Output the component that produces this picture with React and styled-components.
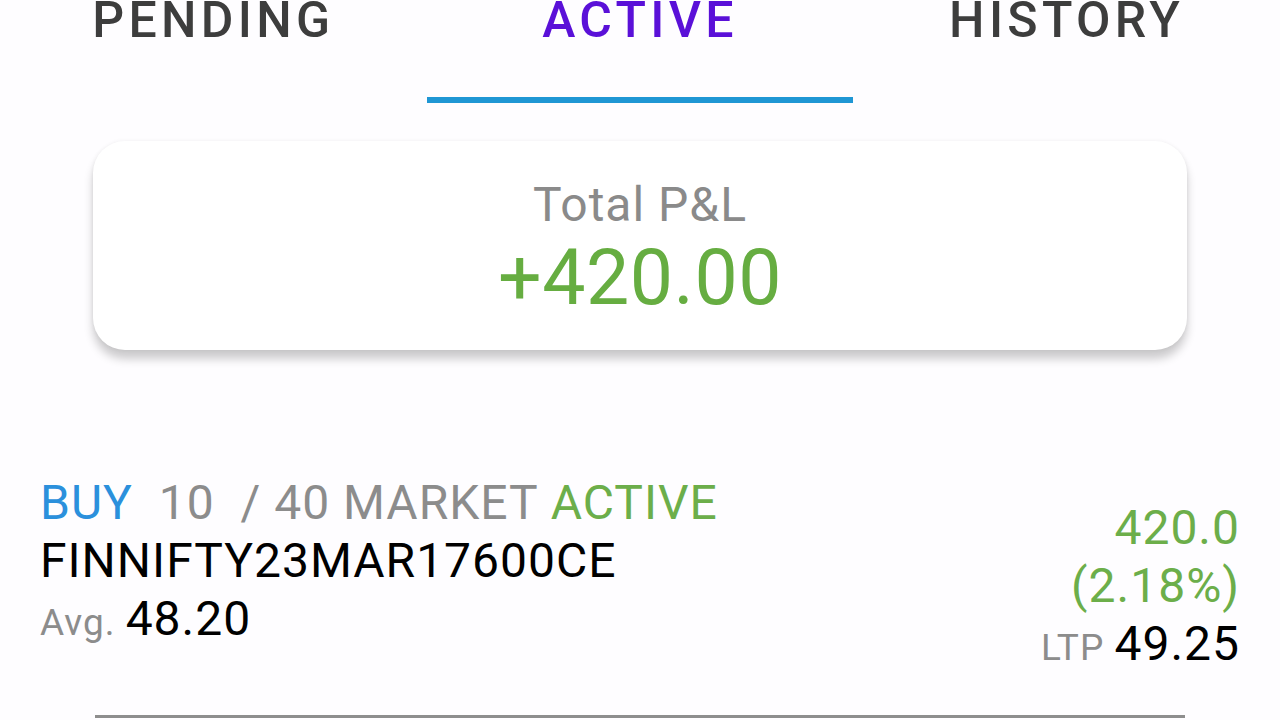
import React from "react";
import styled, { createGlobalStyle } from "styled-components";

const Global = createGlobalStyle`
  html, body { margin: 0; padding: 0; background: #fefdff; }
  body { font-family: Roboto, "Noto Sans", sans-serif; width: 1280px; height: 720px; overflow: hidden; }
`;

const Page = styled.div`
  width: 1280px;
  height: 720px;
  background: #fefdff;
  display: flex;
  flex-direction: column;
`;

const Tabs = styled.div`
  display: grid;
  grid-template-columns: repeat(3, 1fr);
  height: 103px;
`;

const Tab = styled.div`
  display: flex;
  flex-direction: column;
  align-items: center;
  justify-content: space-between;
`;

const TabLabel = styled.div`
  font-size: 50px;
  font-weight: 500;
  letter-spacing: 4.3px;
  line-height: 40px;
  color: ${p => (p.$active ? "#5a10d8" : "#3d3d3d")};
`;

const Indicator = styled.div`
  align-self: stretch;
  height: 6px;
  background: ${p => (p.$active ? "#1f97d4" : "transparent")};
`;

const Card = styled.div`
  margin: 38px 93px 0;
  height: 209px;
  border-radius: 32px;
  background: #fff;
  box-shadow: 0 9px 10px rgba(0, 0, 0, 0.2), 0 0 4px rgba(0, 0, 0, 0.06);
  display: flex;
  flex-direction: column;
  align-items: center;
  padding-top: 34px;
  box-sizing: border-box;
`;

const CardLabel = styled.div`
  font-size: 48px;
  letter-spacing: 1px;
  line-height: 60px;
  color: #8a8a8a;
`;

const CardValue = styled.div`
  margin-top: 3px;
  font-size: 77px;
  letter-spacing: 0.5px;
  line-height: 80px;
  color: #66ad41;
`;

const Row = styled.div`
  margin-top: 124px;
  padding: 0 40px;
  display: flex;
  justify-content: space-between;
  align-items: flex-start;
`;

const Left = styled.div`
  display: flex;
  flex-direction: column;
`;

const Right = styled.div`
  display: flex;
  flex-direction: column;
  align-items: flex-end;
  padding-top: 25px;
`;

const Line = styled.div`
  font-size: 48px;
  letter-spacing: 1px;
  line-height: 58px;
  color: ${p => p.$color || "#000"};
  white-space: pre;
`;

const Span = styled.span`
  color: ${p => p.$color};
  font-size: ${p => p.$size || "inherit"};
`;

const Divider = styled.div`
  margin: 38px 95px 0;
  height: 3px;
  background: #8e8e8e;
`;

const tabs = ["PENDING", "ACTIVE", "HISTORY"];

export default function App() {
  return (
    <Page>
      <Global />
      <Tabs>
        {tabs.map(t => (
          <Tab key={t}>
            <TabLabel $active={t === "ACTIVE"}>{t}</TabLabel>
            <Indicator $active={t === "ACTIVE"} />
          </Tab>
        ))}
      </Tabs>
      <Card>
        <CardLabel>Total P&amp;L</CardLabel>
        <CardValue>+420.00</CardValue>
      </Card>
      <Row>
        <Left>
          <Line>
            <Span $color="#2b90dc">BUY</Span>
            <Span $color="#8c8c8c">{"  10  / 40 MARKET "}</Span>
            <Span $color="#6cae4a">ACTIVE</Span>
          </Line>
          <Line>FINNIFTY23MAR17600CE</Line>
          <Line>
            <Span $color="#8c8c8c" $size="37px">Avg. </Span>48.20
          </Line>
        </Left>
        <Right>
          <Line $color="#6cae4a">420.0</Line>
          <Line $color="#6cae4a">(2.18%)</Line>
          <Line>
            <Span $color="#8c8c8c" $size="37px">LTP </Span>49.25
          </Line>
        </Right>
      </Row>
      <Divider />
    </Page>
  );
}
